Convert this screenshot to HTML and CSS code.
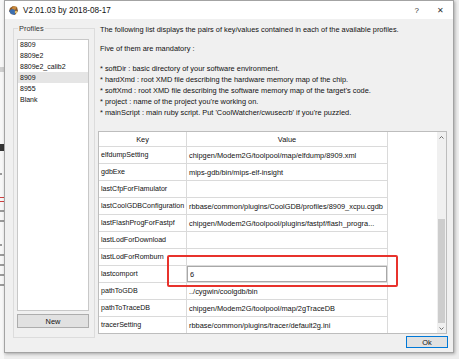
FILE: index.html
```html
<!DOCTYPE html>
<html lang="en">
<head>
    <meta charset="UTF-8">
    <title>V2.01.03 by 2018-08-17</title>
    <link rel="stylesheet" href="styles.css">
</head>
<body>
    <div class="desktop">
        <!-- bits of the app window lying behind the dialog -->
        <div class="behind">
            <div class="bit band"></div>
            <div class="bit dark"></div>
            <div class="bit grey small"></div>
            <div class="bit red"></div>
            <div class="bit red"></div>
            <div class="bit grey"></div>
            <div class="bit grey"></div>
            <div class="bit grey small"></div>
            <div class="bit grey"></div>
            <div class="bit grey"></div>
            <div class="bit grey"></div>
            <div class="bit grey"></div>
        </div>

        <div class="window">
            <div class="titlebar">
                <svg class="app-icon" width="11" height="11" viewBox="0 0 11 11">
                    <path d="M2 3 L5 1 L9 2 L10 6 L7 10 L3 9 L1 6 Z" fill="#8a5a2b"/>
                    <path d="M5 1 L9 2 L7 5 L4 4 Z" fill="#c98a3e"/>
                    <path d="M1 6 L4 4 L7 5 L7 10 L3 9 Z" fill="#3d6fb0"/>
                    <circle cx="8" cy="7" r="1.3" fill="#e0c070"/>
                </svg>
                <span class="title">V2.01.03 by 2018-08-17</span>
                <span class="tb-btn help">?</span>
                <span class="tb-btn close">✕</span>
            </div>

            <div class="content">
                <fieldset class="profiles">
                    <legend>Profiles</legend>
                    <ul class="profile-list">
                        <li>8809</li>
                        <li>8809e2</li>
                        <li>8809e2_calib2</li>
                        <li class="selected">8909</li>
                        <li>8955</li>
                        <li>Blank</li>
                    </ul>
                    <button class="btn new-btn">New</button>
                </fieldset>

                <div class="main">
                    <p class="intro">The following list displays the pairs of key/values contained in each of the available profiles.</p>
                    <p class="intro2">Five of them are mandatory :</p>
                    <ul class="notes">
                        <li>* softDir : basic directory of your software environment.</li>
                        <li>* hardXmd : root XMD file describing the hardware memory map of the chip.</li>
                        <li>* softXmd : root XMD file describing the software memory map of the target's code.</li>
                        <li>* project : name of the project you're working on.</li>
                        <li>* mainScript : main ruby script. Put 'CoolWatcher/cwusecrb' if you're puzzled.</li>
                    </ul>

                    <div class="table-frame">
                        <div class="table-view">
                            <table class="kv">
                                <thead>
                                    <tr>
                                        <th class="col-key">Key</th>
                                        <th class="col-val">Value</th>
                                    </tr>
                                </thead>
                                <tbody>
                                    <tr><td>elfdumpSetting</td><td>chipgen/Modem2G/toolpool/map/elfdump/8909.xml</td></tr>
                                    <tr><td>gdbExe</td><td>mips-gdb/bin/mips-elf-insight</td></tr>
                                    <tr><td>lastCfpForFlamulator</td><td></td></tr>
                                    <tr><td>lastCoolGDBConfiguration</td><td>rbbase/common/plugins/CoolGDB/profiles/8909_xcpu.cgdb</td></tr>
                                    <tr><td>lastFlashProgForFastpf</td><td>chipgen/Modem2G/toolpool/plugins/fastpf/flash_progra...</td></tr>
                                    <tr><td>lastLodForDownload</td><td></td></tr>
                                    <tr><td>lastLodForRomburn</td><td></td></tr>
                                    <tr><td>lastcomport</td><td class="editing"><input class="cell-editor" type="text" value="6"></td></tr>
                                    <tr><td>pathToGDB</td><td>../cygwin/coolgdb/bin</td></tr>
                                    <tr><td>pathToTraceDB</td><td>chipgen/Modem2G/toolpool/map/2gTraceDB</td></tr>
                                    <tr><td>tracerSetting</td><td>rbbase/common/plugins/tracer/default2g.ini</td></tr>
                                </tbody>
                            </table>
                        </div>
                        <div class="scrollbar">
                            <div class="arrow">
                                <svg width="5" height="3" viewBox="0 0 5 3"><path d="M0.5 2.5 L2.5 0.5 L4.5 2.5" fill="none" stroke="#606060" stroke-width="0.9"/></svg>
                            </div>
                            <div class="track"><div class="thumb"></div></div>
                            <div class="arrow">
                                <svg width="5" height="3" viewBox="0 0 5 3"><path d="M0.5 0.5 L2.5 2.5 L4.5 0.5" fill="none" stroke="#606060" stroke-width="0.9"/></svg>
                            </div>
                        </div>
                    </div>

                    <div class="buttons">
                        <button class="btn ok-btn">Ok</button>
                    </div>
                </div>
            </div>

            <!-- red annotation drawn over the screenshot -->
            <div class="mark"></div>
        </div>
    </div>
</body>
</html>
```

FILE: styles.css
```css
body {
    margin: 0;
    font-family: "Liberation Sans", Arial, sans-serif;
    font-size: 7.4px;
    color: #111;
}

.desktop {
    width: 459px;
    height: 359px;
    position: relative;
    overflow: hidden;
    background: #ededed;
}

.behind {
    position: absolute;
    left: 0;
    top: 0;
    width: 4px;
    height: 359px;
    overflow: hidden;
    background: #f7f7f7;
    display: flex;
    flex-direction: column;
}

.bit {
    height: 2px;
    margin-top: 8px;
}

.bit.band {
    height: 5px;
    margin-top: 67px;
    background: #cfcfcf;
}

.bit.dark {
    height: 7px;
    margin-top: 72px;
    background: #333;
}

.bit.grey {
    background: #9a9a9a;
}

.bit.small {
    margin-top: 22px;
    width: 2px;
}

.bit.red {
    height: 1px;
    margin-top: 22px;
    background: #d04040;
}

.bit.red + .bit.red {
    margin-top: 3px;
}

.window {
    position: relative;
    margin-left: 4px;
    width: 450px;
    height: 353px;
    box-sizing: border-box;
    border: 1px solid #a3a3a3;
    background: #f0f0f0;
    box-shadow: 1px 1px 3px rgba(0, 0, 0, 0.3);
    display: flex;
    flex-direction: column;
}

.titlebar {
    height: 18px;
    flex: none;
    background: #fff;
    display: flex;
    align-items: center;
    padding: 0 9px 0 3px;
}

.app-icon {
    margin-right: 4px;
}

.title {
    font-size: 8.2px;
    color: #111;
}

.tb-btn {
    color: #333;
    font-size: 8px;
}

.help {
    margin-left: auto;
    margin-right: 18px;
}

.content {
    flex: 1;
    display: flex;
    gap: 3px;
    padding: 5px 5px 0 8px;
}

.profiles {
    width: 82px;
    height: 314px;
    box-sizing: border-box;
    margin: 0;
    padding: 6px 5px 9px 3px;
    border: 1px solid #dcdcdc;
    display: flex;
    flex-direction: column;
}

.profiles legend {
    padding: 0 1px;
    margin-left: 1px;
    line-height: 9px;
    color: #333;
}

.profile-list {
    list-style: none;
    margin: 0;
    padding: 0;
    height: 272px;
    box-sizing: border-box;
    background: #fff;
    border: 1px solid #c8c8c8;
    font-size: 7px;
}

.profile-list li {
    line-height: 11px;
    padding-left: 2px;
}

.profile-list li:first-child {
    margin-top: -1px;
}

.profile-list li.selected {
    background: #e5e5e5;
}

.btn {
    font-family: inherit;
    font-size: 7.4px;
    color: #111;
    background: #e1e1e1;
    border: 1px solid #adadad;
    padding: 0;
}

.new-btn {
    margin-top: 3px;
    height: 14px;
}

.main {
    width: 350px;
    display: flex;
    flex-direction: column;
    padding-left: 2px;
    box-sizing: border-box;
}

.main p {
    margin: 0;
    line-height: 11px;
}

.intro {
    margin-bottom: 8px !important;
}

.intro2 {
    margin-bottom: 9px !important;
}

.notes {
    list-style: none;
    margin: 0;
    padding: 0;
}

.notes li {
    line-height: 11px;
}

.table-frame {
    margin: 13px 1px 0 -2px;
    height: 203px;
    box-sizing: border-box;
    border: 1px solid #bdbdbd;
    background: #fff;
    display: flex;
}

.table-view {
    flex: 1;
    overflow: hidden;
}

.kv {
    table-layout: fixed;
    width: 289px;
    border-collapse: separate;
    border-spacing: 0;
}

.kv th,
.kv td {
    box-sizing: border-box;
    border-right: 1px solid #dadada;
    border-bottom: 1px solid #dadada;
    padding: 0 2px;
    white-space: nowrap;
    overflow: hidden;
    text-overflow: ellipsis;
    text-align: left;
    font-weight: normal;
}

.kv td:first-child {
    padding: 0 0 0 2px;
    font-size: 7.1px;
    text-overflow: clip;
}

.kv th {
    height: 15px;
    text-align: center;
}

.kv td {
    height: 17px;
}

.col-key {
    width: 88px;
}

.col-val {
    width: 201px;
}

.kv td.editing {
    padding: 0;
}

.cell-editor {
    display: block;
    width: 100%;
    height: 16px;
    box-sizing: border-box;
    margin: 0;
    padding: 0 2px;
    border: 1px solid #a8a8a8;
    font-family: inherit;
    font-size: 7.4px;
    color: #111;
    outline: none;
}

.scrollbar {
    width: 9px;
    background: #f0f0f0;
    display: flex;
    flex-direction: column;
}

.arrow {
    height: 10px;
    display: flex;
    align-items: center;
    justify-content: center;
}

.track {
    flex: 1;
    display: flex;
    flex-direction: column;
    justify-content: flex-end;
    padding: 0 1px;
}

.thumb {
    height: 104px;
    background: #cdcdcd;
}

.buttons {
    display: flex;
    justify-content: flex-end;
    margin-top: 2px;
}

.ok-btn {
    width: 42px;
    height: 12px;
    border-color: #0078d7;
}

.mark {
    position: absolute;
    left: 162px;
    top: 254px;
    width: 231px;
    height: 32px;
    box-sizing: border-box;
    border: 2px solid #e8322c;
    border-radius: 2px;
}
```
